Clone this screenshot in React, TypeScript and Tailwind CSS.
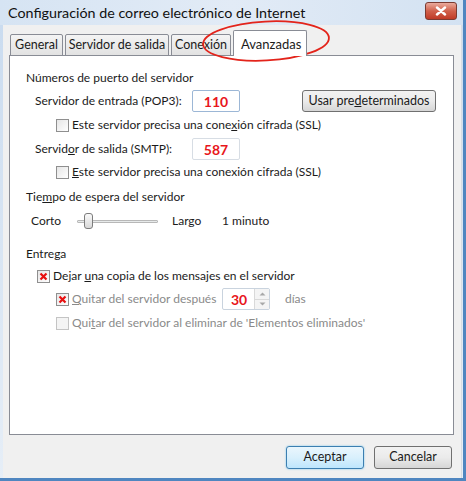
import React from "react";

const font = { fontFamily: "Lato, 'Liberation Sans', sans-serif" };

const Check: React.FC<{ checked?: boolean; disabled?: boolean }> = ({ checked, disabled }) => (
  <span
    className={`flex items-center justify-center w-[13px] h-[13px] border shrink-0 ${
      disabled ? "border-[#c4c4c4] bg-[#f4f4f4]" : "border-[#8f8f8f] bg-gradient-to-br from-[#e6e6e6] to-white"
    }`}
  >
    {checked && (
      <svg width="9" height="9" viewBox="0 0 9 9">
        <path d="M1.5 1.5 L7.5 7.5 M7.5 1.5 L1.5 7.5" stroke="#e81010" strokeWidth="2.2" />
      </svg>
    )}
  </span>
);

const Section: React.FC<{ title: React.ReactNode; className?: string }> = ({ title, className }) => (
  <div className={`flex items-center h-[16px] ${className ?? ""}`}>
    <span className="whitespace-nowrap">{title}</span>
    <span className="flex-1 ml-[9px] h-px bg-[#d5d5d5] border-b border-white" />
  </div>
);

const PortBox: React.FC<{ value: string; active?: boolean }> = ({ value, active }) => (
  <div
    className={`w-[48px] h-[22px] flex items-center justify-center bg-white border rounded-[2px] text-[#e8161b] font-bold text-[14px] ${
      active ? "border-[#9cb7d6]" : "border-[#d7dde4]"
    }`}
  >
    {value}
  </div>
);

const Tab: React.FC<{ label: React.ReactNode; active?: boolean; w: number }> = ({ label, active, w }) =>
  active ? (
    <div
      style={{ width: w }}
      className="h-[26px] -mb-px relative z-10 bg-white border border-[#898c95] border-b-0 rounded-t-[2px] pl-[7px] pt-[4px] text-[13px]"
    >
      {label}
    </div>
  ) : (
    <div
      style={{ width: w }}
      className="h-[22px] self-end mb-[-1px] bg-gradient-to-b from-[#f4f4f4] to-[#e2e2e2] border border-[#898c95] rounded-t-[2px] flex items-center justify-center text-[12.5px]"
    >
      {label}
    </div>
  );

export default function App() {
  return (
    <div
      style={font}
      className="w-[466px] h-[481px] relative overflow-hidden bg-gradient-to-b from-[#c9dbef] to-[#e6eef7] text-[12px] text-[#1b1b1b]"
    >
      {/* title bar */}
      <div className="h-[25px] flex items-center pl-[8px] pr-[9px] bg-gradient-to-r from-[#d6e4f3] via-[#e2ebf6] to-[#d3e2f2]">
        <span className="text-[14.3px] text-[#111]">Configuración de correo electrónico de Internet</span>
        <div className="ml-auto mt-[-4px] w-[32px] h-[18px] rounded-[3px] border border-[#7a3b32] bg-gradient-to-b from-[#e9aa9c] via-[#d0604b] to-[#c03a26] flex items-center justify-center">
          <svg width="12" height="10" viewBox="0 0 12 10">
            <path d="M2 1.5 L10 8.5 M10 1.5 L2 8.5" stroke="white" strokeWidth="2.4" strokeLinecap="round" />
          </svg>
        </div>
      </div>

      {/* client area */}
      <div className="absolute left-[3px] top-[25px] right-[4px] bottom-[3px] bg-[#f0f0f0] border-r border-[#d8dde3]">
        <div className="flex items-end gap-[2px] ml-[7px] mt-[3px] h-[27px]">
          <Tab label="General" w={53} />
          <Tab label="Servidor de salida" w={104} />
          <Tab label="Conexión" w={60} />
          <Tab label="Avanzadas" w={74} active />
        </div>

        <div className="ml-[6px] w-[445px] h-[380px] bg-white border border-[#898c95] pl-[16px] pr-[17px] pt-[14px]">
          <Section title="Números de puerto del servidor" />

          <div className="flex items-center h-[22px] mt-[4px] pl-[9px]">
            <span className="w-[157px] whitespace-nowrap">Servidor de entrada (POP3):</span>
            <PortBox value="110" active />
            <button className="ml-auto w-[134px] h-[22px] rounded-[3px] border border-[#707070] bg-gradient-to-b from-[#f2f2f2] via-[#ebebeb] to-[#d6d6d6] text-[12.5px]">
              Usar pre<span className="underline">d</span>eterminados
            </button>
          </div>

          <div className="flex items-center h-[16px] mt-[5px] pl-[30px] gap-[3px]">
            <Check />
            <span className="whitespace-nowrap">Este servidor precisa una cone<span className="underline">x</span>ión cifrada (SSL)</span>
          </div>

          <div className="flex items-center h-[22px] mt-[5px] pl-[9px]">
            <span className="w-[157px] whitespace-nowrap">Servid<span className="underline">o</span>r de salida (SMTP):</span>
            <PortBox value="587" />
          </div>

          <div className="flex items-center h-[16px] mt-[4px] pl-[30px] gap-[3px]">
            <Check />
            <span className="whitespace-nowrap"><span className="underline">E</span>ste servidor precisa una conexión cifrada (SSL)</span>
          </div>

          <Section title={<>Tie<span className="underline">m</span>po de espera del servidor</>} className="mt-[9px]" />

          <div className="flex items-center h-[18px] mt-[7px] pl-[5px]">
            <span className="w-[46px]">Corto</span>
            <div className="relative w-[81px] h-[18px] flex items-center">
              <div className="w-full h-[3px] bg-[#e7eaea] border border-[#b8b8b8] rounded-[1px]" />
              <div className="absolute left-[7px] top-[1px] w-[9px] h-[16px] rounded-[3px] border border-[#7c7c7c] bg-gradient-to-b from-[#fafafa] to-[#d8d8d8]" />
            </div>
            <span className="ml-[14px] w-[50px]">Largo</span>
            <span>1 minuto</span>
          </div>

          <Section title="Entrega" className="mt-[16px]" />

          <div className="flex items-center h-[16px] mt-[6px] pl-[11px] gap-[3px]">
            <Check checked />
            <span className="whitespace-nowrap">Dejar <span className="underline">u</span>na copia de los mensajes en el servidor</span>
          </div>

          <div className="flex items-center h-[22px] mt-[4px] pl-[30px]">
            <Check checked />
            <span className="ml-[3px] w-[150px] whitespace-nowrap text-[#8a8a8a]"><span className="underline">Q</span>uitar del servidor después</span>
            <div className="w-[48px] h-[22px] flex bg-white border border-[#c9d3de] rounded-[2px]">
              <span className="flex-1 flex items-center pl-[8px] text-[#e8161b] font-bold text-[14px]">30</span>
              <div className="w-[15px] flex flex-col border-l border-[#d9d9d9]">
                <div className="flex-1 flex items-center justify-center border-b border-[#d9d9d9] bg-[#f4f4f4]">
                  <svg width="7" height="4" viewBox="0 0 7 4"><path d="M0.5 3.5 L3.5 0.5 L6.5 3.5Z" fill="#a8a8a8" /></svg>
                </div>
                <div className="flex-1 flex items-center justify-center bg-[#f4f4f4]">
                  <svg width="7" height="4" viewBox="0 0 7 4"><path d="M0.5 0.5 L3.5 3.5 L6.5 0.5Z" fill="#a8a8a8" /></svg>
                </div>
              </div>
            </div>
            <span className="ml-[15px] text-[#8a8a8a]">días</span>
          </div>

          <div className="flex items-center h-[16px] mt-[5px] pl-[30px]">
            <Check disabled />
            <span className="ml-[3px] whitespace-nowrap text-[#8a8a8a]">Qui<span className="underline">t</span>ar del servidor al eliminar de 'Elementos eliminados'</span>
          </div>
        </div>

        <div className="flex justify-end gap-[10px] mt-[11px] pr-[9px]">
          <button className="w-[78px] h-[23px] rounded-[3px] border border-[#3c7fb1] bg-gradient-to-b from-[#eaf6fd] via-[#d9f0fc] to-[#bee6fd] shadow-[0_0_2px_#6fc0ea] text-[12.5px]">
            Aceptar
          </button>
          <button className="w-[78px] h-[23px] rounded-[3px] border border-[#707070] bg-gradient-to-b from-[#f2f2f2] via-[#ebebeb] to-[#d6d6d6] text-[12.5px]">
            Cancelar
          </button>
        </div>
      </div>

      {/* window frame edges */}
      <div className="absolute top-0 right-0 w-[3px] h-full bg-[#4f86c0]" />
      <div className="absolute bottom-0 left-0 w-full h-[3px] bg-[#4f86c0]" />

      {/* red annotation ring */}
      <svg className="absolute left-0 top-0 pointer-events-none" width="466" height="80">
        <ellipse cx="266" cy="41" rx="63" ry="19.5" fill="none" stroke="#e3241b" strokeWidth="1.8" transform="rotate(-3 266 41)" />
      </svg>
    </div>
  );
}
